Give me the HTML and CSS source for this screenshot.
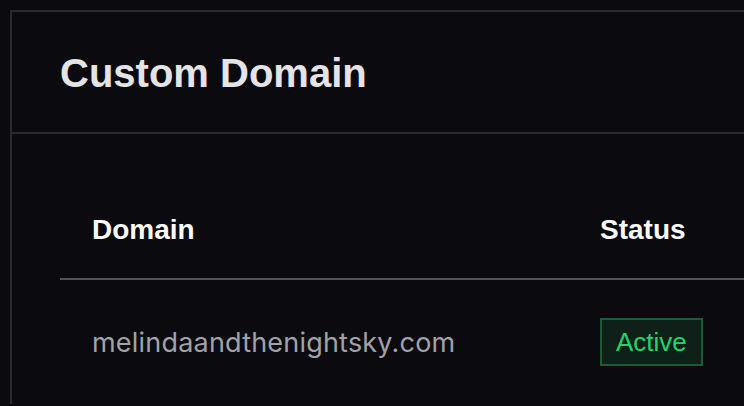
FILE: index.html
```html
<!DOCTYPE html>
<html lang="en">
<head>
  <meta charset="UTF-8">
  <meta name="viewport" content="width=device-width, initial-scale=1.0">
  <title>Custom Domain</title>
  <link rel="stylesheet" href="styles.css">
</head>
<body>
  <section class="card">
    <header class="card-header">
      <h1>Custom Domain</h1>
    </header>

    <div class="card-body">
      <table class="domain-table">
        <thead>
          <tr>
            <th class="col-domain">Domain</th>
            <th class="col-status">Status</th>
          </tr>
        </thead>
        <tbody>
          <tr>
            <td class="domain-name">melindaandthenightsky.com</td>
            <td><span class="badge badge-active">Active</span></td>
          </tr>
        </tbody>
      </table>
    </div>
  </section>
</body>
</html>
```

FILE: styles.css
```css
:root {
  --background-color: #0b0b0f;
  --border-color: #2a2a2e;
  --rule-color: #52525b;
  --title-color: #e4e4e7;
  --heading-color: #fafafa;
  --muted-color: #a1a1aa;
  --success-color: #22d46c;
  --success-border: #1d5a37;
  --success-background: #0f2019;
}

* {
  margin: 0;
  padding: 0;
  box-sizing: border-box;
}

body {
  font-family: 'Liberation Sans', Arial, sans-serif;
  background-color: var(--background-color);
  color: var(--heading-color);
  padding: 10px 0 0 10px;
  overflow: hidden;
  min-height: 100vh;
}

.card {
  width: 100%;
  border: 2px solid var(--border-color);
  border-right: none;
  border-bottom: none;
}

.card-header {
  height: 122px;
  display: flex;
  align-items: center;
  padding: 0 48px;
  border-bottom: 2px solid var(--border-color);
}

h1 {
  font-size: 40px;
  font-weight: bold;
  color: var(--title-color);
  line-height: 1;
  padding-top: 2px;
}

.card-body {
  padding: 46px 0 0 48px;
}

.domain-table {
  width: 100%;
  border-collapse: collapse;
  text-align: left;
}

.domain-table th {
  font-size: 28px;
  font-weight: bold;
  line-height: 34px;
  padding: 33px 32px 31px;
  border-bottom: 2px solid var(--rule-color);
}

.col-domain {
  width: 508px;
}

.domain-table td {
  padding: 38px 32px;
  vertical-align: middle;
}

.domain-name {
  font-family: Inter, 'Liberation Sans', sans-serif;
  font-size: 27px;
  letter-spacing: 0.2px;
  color: var(--muted-color);
}

/* 状态标签 */
.badge {
  display: inline-block;
  font-size: 26px;
  line-height: 30px;
  padding: 7px 14px;
  border: 2px solid;
}

.badge-active {
  color: var(--success-color);
  border-color: var(--success-border);
  background-color: var(--success-background);
}
```
